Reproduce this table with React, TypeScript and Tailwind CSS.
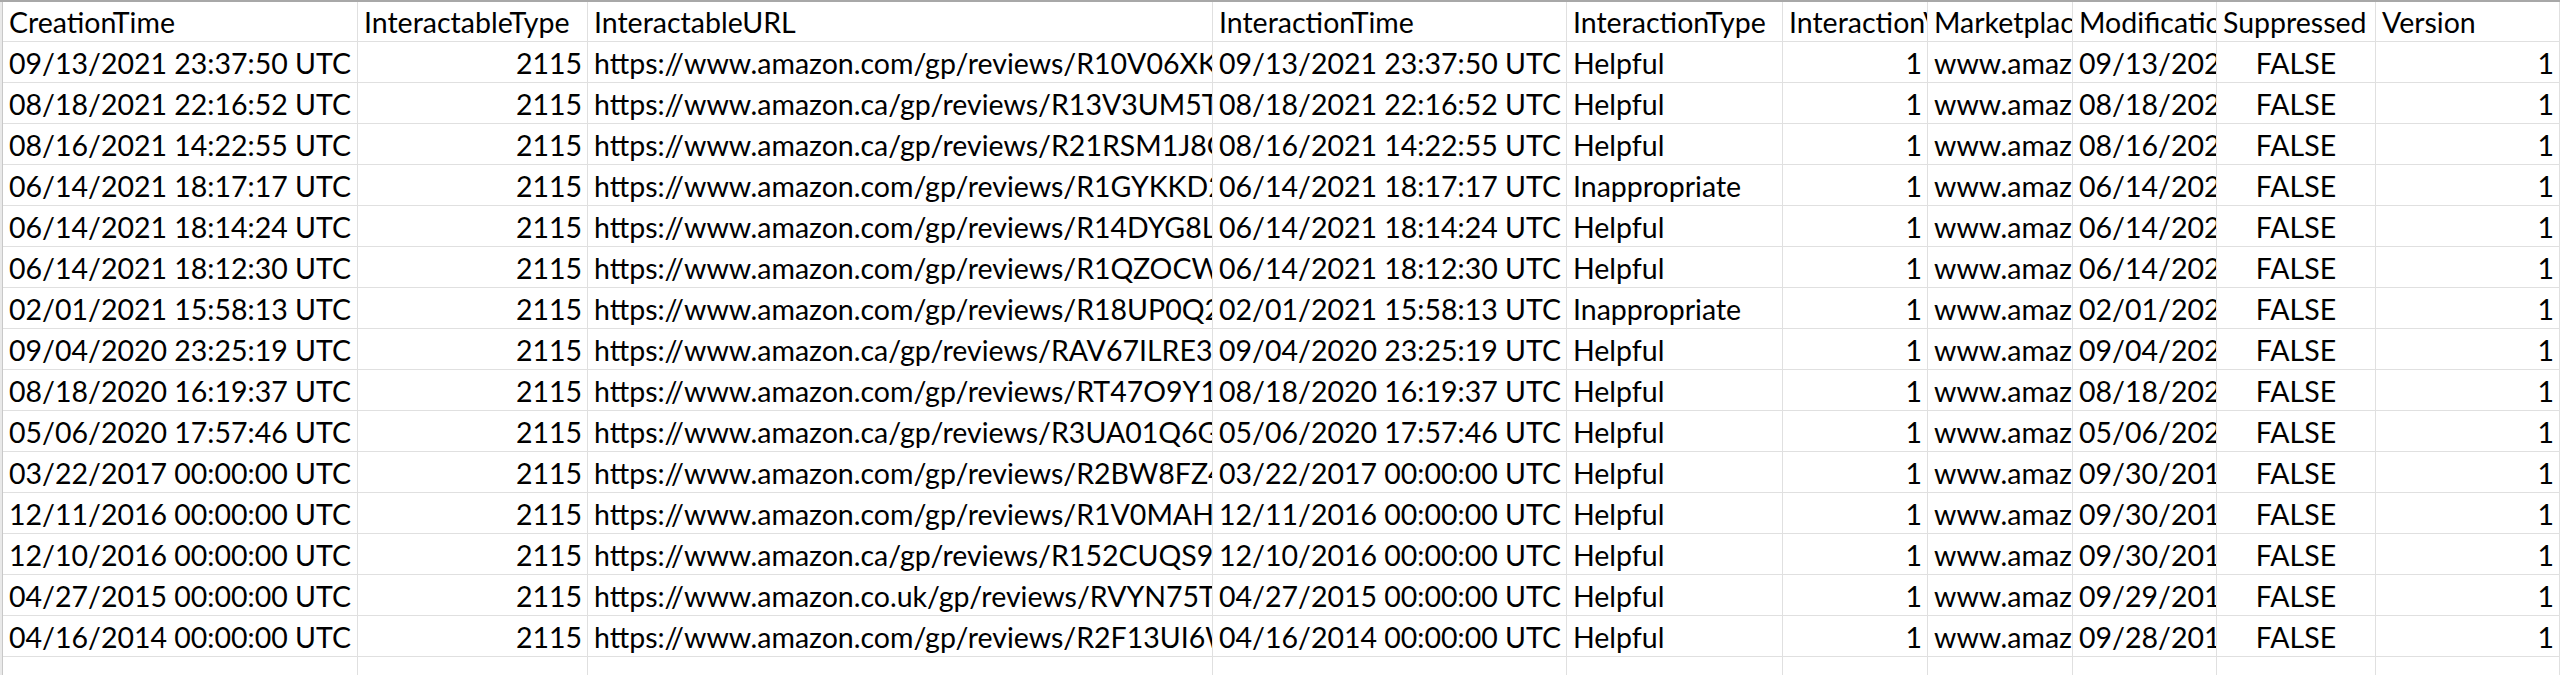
const COLS = [
  { key: 'creation', title: 'CreationTime', w: 'w-[355px]', align: 'left' },
  { key: 'type', title: 'InteractableType', w: 'w-[230px]', align: 'right' },
  { key: 'url', title: 'InteractableURL', w: 'w-[625px]', align: 'left' },
  { key: 'itime', title: 'InteractionTime', w: 'w-[354px]', align: 'left' },
  { key: 'itype', title: 'InteractionType', w: 'w-[216px]', align: 'left' },
  { key: 'ival', title: 'InteractionValue', w: 'w-[145px]', align: 'right' },
  { key: 'market', title: 'MarketplaceDomain', w: 'w-[145px]', align: 'left' },
  { key: 'mod', title: 'ModificationTime', w: 'w-[144px]', align: 'left' },
  { key: 'sup', title: 'Suppressed', w: 'w-[159px]', align: 'center' },
  { key: 'ver', title: 'Version', w: 'w-[184px]', align: 'right' },
] as const

type Row = { t: string; dom: string; id: string; kind: string; mod: string }

const ROWS: Row[] = [
  { t: '09/13/2021 23:37:50 UTC', dom: 'com', id: 'R10V06XK2QF8ZL', kind: 'Helpful', mod: '09/13/2021 23:37:50 UTC' },
  { t: '08/18/2021 22:16:52 UTC', dom: 'ca', id: 'R13V3UM5TQ1WXE', kind: 'Helpful', mod: '08/18/2021 22:16:52 UTC' },
  { t: '08/16/2021 14:22:55 UTC', dom: 'ca', id: 'R21RSM1J8GZ0PD', kind: 'Helpful', mod: '08/16/2021 14:22:55 UTC' },
  { t: '06/14/2021 18:17:17 UTC', dom: 'com', id: 'R1GYKKD2N7B4QS', kind: 'Inappropriate', mod: '06/14/2021 18:17:17 UTC' },
  { t: '06/14/2021 18:14:24 UTC', dom: 'com', id: 'R14DYG8L3V6MHT', kind: 'Helpful', mod: '06/14/2021 18:14:24 UTC' },
  { t: '06/14/2021 18:12:30 UTC', dom: 'com', id: 'R1QZOCW9E2TNUA', kind: 'Helpful', mod: '06/14/2021 18:12:30 UTC' },
  { t: '02/01/2021 15:58:13 UTC', dom: 'com', id: 'R18UP0Q2H5XKJB', kind: 'Inappropriate', mod: '02/01/2021 15:58:13 UTC' },
  { t: '09/04/2020 23:25:19 UTC', dom: 'ca', id: 'RAV67ILRE3PZ9C', kind: 'Helpful', mod: '09/04/2020 23:25:19 UTC' },
  { t: '08/18/2020 16:19:37 UTC', dom: 'com', id: 'RT47O9Y1MSD8F', kind: 'Helpful', mod: '08/18/2020 16:19:37 UTC' },
  { t: '05/06/2020 17:57:46 UTC', dom: 'ca', id: 'R3UA01Q6G8VLWN', kind: 'Helpful', mod: '05/06/2020 17:57:46 UTC' },
  { t: '03/22/2017 00:00:00 UTC', dom: 'com', id: 'R2BW8FZ4K1YTQE', kind: 'Helpful', mod: '09/30/2018 00:00:00 UTC' },
  { t: '12/11/2016 00:00:00 UTC', dom: 'com', id: 'R1V0MAH7P2CUXS', kind: 'Helpful', mod: '09/30/2018 00:00:00 UTC' },
  { t: '12/10/2016 00:00:00 UTC', dom: 'ca', id: 'R152CUQS9DJ4LV', kind: 'Helpful', mod: '09/30/2018 00:00:00 UTC' },
  { t: '04/27/2015 00:00:00 UTC', dom: 'co.uk', id: 'RVYN75T2XG0EKP', kind: 'Helpful', mod: '09/29/2018 00:00:00 UTC' },
  { t: '04/16/2014 00:00:00 UTC', dom: 'com', id: 'R2F13UI6WB8NZR', kind: 'Helpful', mod: '09/28/2018 00:00:00 UTC' },
]

function cellValues(r: Row): string[] {
  return [
    r.t,
    '2115',
    `https://www.amazon.${r.dom}/gp/reviews/${r.id}`,
    r.t,
    r.kind,
    '1',
    `www.amazon.${r.dom}`,
    r.mod,
    'FALSE',
    '1',
  ]
}

function Cell({ i, text, h, header }: { i: number; text: string; h: string; header?: boolean }) {
  const col = COLS[i]
  const kind = header ? 'left' : col.align
  const align =
    kind === 'right' ? 'justify-end pr-[5px]' : kind === 'center' ? 'justify-center' : 'justify-start pl-[6px]'
  return (
    <div
      className={`${col.w} ${h} shrink-0 flex items-end pb-[5px] ${align} overflow-hidden whitespace-nowrap border-r border-b border-[#e0e0e0]`}
    >
      {text}
    </div>
  )
}

export default function App() {
  return (
    <div
      className="w-[2560px] h-[675px] overflow-hidden bg-white text-[28.5px] leading-none text-black"
      style={{ fontFamily: 'Lato, "Open Sans", sans-serif' }}
    >
      <div className="h-[2px] bg-[#a8a8a8]" />
      <div className="flex">
        <div className="w-[3px] shrink-0 bg-[#e9e9e9] border-r border-[#c8c8c8] h-[673px]" />
        <div className="flex flex-col">
          <div className="flex">
            {COLS.map((c, i) => (
              <Cell key={c.key} i={i} text={c.title} h="h-[40px]" header />
            ))}
          </div>
          {ROWS.map((r, ri) => (
            <div key={ri} className="flex">
              {cellValues(r).map((v, i) => (
                <Cell key={i} i={i} text={v} h="h-[41px]" />
              ))}
            </div>
          ))}
          <div className="flex">
            {COLS.map((c, i) => (
              <Cell key={c.key} i={i} text="" h="h-[41px]" />
            ))}
          </div>
        </div>
      </div>
    </div>
  )
}
